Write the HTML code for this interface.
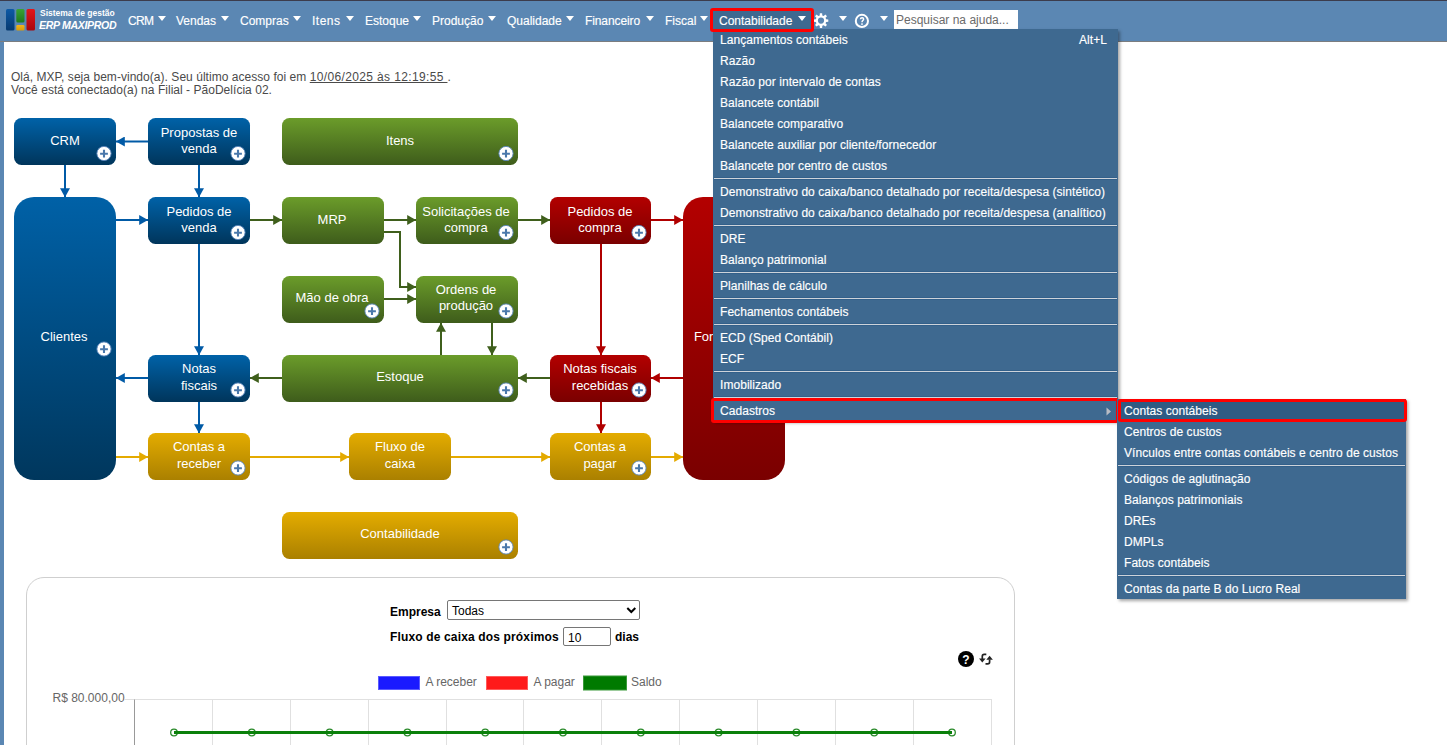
<!DOCTYPE html>
<html><head><meta charset="utf-8">
<style>
*{margin:0;padding:0;box-sizing:border-box}
html,body{width:1447px;height:745px;overflow:hidden;background:#fff;font-family:"Liberation Sans",sans-serif}
.abs{position:absolute}
#topline{left:0;top:0;width:1447px;height:1px;background:#3c3c4c}
#nav{left:0;top:1px;width:1447px;height:41px;background:#5b87b3;border-bottom:1px solid #7b7d80}
#leftstrip{left:0;top:42px;width:4px;height:703px;background:#5b87b3}
.nt{position:absolute;top:14px;font-size:12px;color:#fff;white-space:nowrap;line-height:14px;-webkit-text-stroke:0.15px #fff}
.tri{position:absolute;top:16px;width:0;height:0;border-left:4px solid transparent;border-right:4px solid transparent;border-top:5px solid #fff}
.greet{position:absolute;left:11px;font-size:12px;color:#4a4a4a;white-space:nowrap;line-height:13px;letter-spacing:0.04px}
.dd{position:absolute;background:#3e6990;box-shadow:2px 2px 3px rgba(0,0,0,.35)}
.mi{position:absolute;font-size:12px;color:#fff;white-space:nowrap;line-height:14px;letter-spacing:0.05px;-webkit-text-stroke:0.15px #fff}
.sep{position:absolute;height:3px;background:#cdd3da;border-top:1px solid #33608a;border-bottom:1px solid #33608a}
.redbox{position:absolute;border:3px solid #ff0000;border-radius:3px}
</style></head><body>
<div class="abs" id="topline"></div>
<div class="abs" id="nav"></div>
<div class="abs" id="leftstrip"></div>

<!-- logo -->
<svg class="abs" style="left:0;top:0" width="40" height="42">
 <defs>
  <linearGradient id="lb" x1="0" y1="0" x2="0" y2="1"><stop offset="0" stop-color="#0d5aa6"/><stop offset="1" stop-color="#073a70"/></linearGradient>
  <linearGradient id="lg" x1="0" y1="0" x2="0" y2="1"><stop offset="0" stop-color="#3aa334"/><stop offset="1" stop-color="#1f7a1c"/></linearGradient>
  <linearGradient id="lr" x1="0" y1="0" x2="0" y2="1"><stop offset="0" stop-color="#e3151b"/><stop offset="1" stop-color="#a8080d"/></linearGradient>
  <linearGradient id="ly" x1="0" y1="0" x2="0" y2="1"><stop offset="0" stop-color="#f2b51c"/><stop offset="1" stop-color="#d99b08"/></linearGradient>
 </defs>
 <rect x="6" y="9" width="8.5" height="21.5" rx="1.5" fill="url(#lb)"/>
 <rect x="16.3" y="9" width="8.2" height="13.5" rx="1.5" fill="url(#lg)"/>
 <rect x="16.3" y="25" width="8.2" height="5.5" rx="1.2" fill="url(#ly)"/>
 <rect x="26.5" y="9" width="8.5" height="21.5" rx="1.5" fill="url(#lr)"/>
</svg>
<div class="abs" style="left:40px;top:8px;font-size:8.5px;font-weight:bold;color:#fff;white-space:nowrap;line-height:10px">Sistema de gestão</div>
<div class="abs" style="left:39px;top:19px;font-size:10.6px;font-weight:bold;font-style:italic;color:#fff;white-space:nowrap;line-height:12px;letter-spacing:-0.35px">ERP MAXIPROD</div>

<!-- nav items -->
<div class="nt" style="left:128px;letter-spacing:-0.7px">CRM</div><div class="tri" style="left:158px"></div>
<div class="nt" style="left:176px">Vendas</div><div class="tri" style="left:221px"></div>
<div class="nt" style="left:240px">Compras</div><div class="tri" style="left:293px"></div>
<div class="nt" style="left:312px;letter-spacing:0.5px">Itens</div><div class="tri" style="left:346px"></div>
<div class="nt" style="left:365px">Estoque</div><div class="tri" style="left:413px"></div>
<div class="nt" style="left:432px">Produção</div><div class="tri" style="left:488px"></div>
<div class="nt" style="left:507px">Qualidade</div><div class="tri" style="left:566px"></div>
<div class="nt" style="left:585px;letter-spacing:-0.1px">Financeiro</div><div class="tri" style="left:646px"></div>
<div class="nt" style="left:665px">Fiscal</div><div class="tri" style="left:700px"></div>
<div class="abs" style="left:713px;top:11px;width:98px;height:18px;background:#3e6990"></div>
<div class="nt" style="left:719px">Contabilidade</div><div class="tri" style="left:798px"></div>

<!-- gear -->
<svg class="abs" style="left:812px;top:11px" width="18" height="19" viewBox="0 0 18 19">
 <path fill="#fff" fill-rule="evenodd" d="M7.72 4.46 L7.84 2.29 L10.16 2.29 L10.28 4.46 L11.73 5.06 L13.35 3.61 L14.99 5.25 L13.54 6.87 L14.14 8.32 L16.31 8.44 L16.31 10.76 L14.14 10.88 L13.54 12.33 L14.99 13.95 L13.35 15.59 L11.73 14.14 L10.28 14.74 L10.16 16.91 L7.84 16.91 L7.72 14.74 L6.27 14.14 L4.65 15.59 L3.01 13.95 L4.46 12.33 L3.86 10.88 L1.69 10.76 L1.69 8.44 L3.86 8.32 L4.46 6.87 L3.01 5.25 L4.65 3.61 L6.27 5.06Z M12.1 9.6 A3.1 3.1 0 1 0 5.9 9.6 A3.1 3.1 0 1 0 12.1 9.6Z"/>
</svg>
<div class="tri" style="left:839px"></div>
<svg class="abs" style="left:853px;top:12px" width="18" height="18" viewBox="0 0 18 18">
 <circle cx="8.9" cy="8.9" r="6.1" fill="none" stroke="#fff" stroke-width="2"/>
 <path d="M7.5 7.2Q7.5 5.7 9.1 5.7Q10.6 5.7 10.6 7.1Q10.6 8.1 9.7 8.6Q9 9.1 9 10.3" fill="none" stroke="#fff" stroke-width="1.5"/>
 <rect x="8.25" y="11.3" width="1.5" height="1.6" fill="#fff"/>
</svg>
<div class="tri" style="left:880px"></div>
<div class="abs" style="left:894px;top:10px;width:124px;height:19px;background:#fff"></div>
<div class="abs" style="left:896px;top:13px;font-size:12px;color:#6a6a6a;white-space:nowrap;line-height:14px">Pesquisar na ajuda...</div>

<!-- greeting -->
<div class="greet" style="top:71px">Olá, MXP, seja bem-vindo(a). Seu último acesso foi em <span style="text-decoration:underline;text-underline-offset:1px;letter-spacing:0.36px">10/06/2025 às 12:19:55 </span>.</div>
<div class="greet" style="top:84px;letter-spacing:0.03px">Você está conectado(a) na Filial - PãoDelícia 02.</div>

<!-- DIAGRAM -->
<svg class="abs" style="left:0;top:0" width="800" height="570" font-family="Liberation Sans" font-size="13">
 <defs>
  <linearGradient id="gB" x1="0" y1="0" x2="0" y2="1"><stop offset="0" stop-color="#0062a8"/><stop offset="1" stop-color="#00355b"/></linearGradient>
  <linearGradient id="gBt" x1="0" y1="0" x2="0" y2="1"><stop offset="0" stop-color="#0061a7"/><stop offset="1" stop-color="#00375d"/></linearGradient>
  <linearGradient id="gG" x1="0" y1="0" x2="0" y2="1"><stop offset="0" stop-color="#6b9c2a"/><stop offset="1" stop-color="#3e5c1b"/></linearGradient>
  <linearGradient id="gR" x1="0" y1="0" x2="0" y2="1"><stop offset="0" stop-color="#b30000"/><stop offset="1" stop-color="#7a0000"/></linearGradient>
  <linearGradient id="gY" x1="0" y1="0" x2="0" y2="1"><stop offset="0" stop-color="#e4ac00"/><stop offset="1" stop-color="#aa8000"/></linearGradient>
  <g id="plus">
   <circle r="7.1" fill="#fff" stroke="#5a86bb" stroke-width="0.9"/>
   <path d="M-3.9 0.2H3.9M0 -3.7V4.1" stroke="#4a78ab" stroke-width="2.1"/>
  </g>
  <marker id="aB" viewBox="0 0 9 10" refX="8.8" refY="5" markerWidth="9" markerHeight="10" markerUnits="userSpaceOnUse" orient="auto"><path d="M0 0L9 5L0 10z" fill="#005aa6"/></marker>
  <marker id="aG" viewBox="0 0 9 10" refX="8.8" refY="5" markerWidth="9" markerHeight="10" markerUnits="userSpaceOnUse" orient="auto"><path d="M0 0L9 5L0 10z" fill="#3f5f1c"/></marker>
  <marker id="aR" viewBox="0 0 9 10" refX="8.8" refY="5" markerWidth="9" markerHeight="10" markerUnits="userSpaceOnUse" orient="auto"><path d="M0 0L9 5L0 10z" fill="#b00000"/></marker>
  <marker id="aY" viewBox="0 0 9 10" refX="8.8" refY="5" markerWidth="9" markerHeight="10" markerUnits="userSpaceOnUse" orient="auto"><path d="M0 0L9 5L0 10z" fill="#e4aa00"/></marker>
 </defs>
 <g fill="none" stroke-width="2">
  <!-- blue -->
  <path d="M148 141.5H116" stroke="#005aa6" marker-end="url(#aB)"/>
  <path d="M65 165V197" stroke="#005aa6" marker-end="url(#aB)"/>
  <path d="M199 165V197" stroke="#005aa6" marker-end="url(#aB)"/>
  <path d="M116 220H148" stroke="#005aa6" marker-end="url(#aB)"/>
  <path d="M199 244V355" stroke="#005aa6" marker-end="url(#aB)"/>
  <path d="M148 378H116" stroke="#005aa6" marker-end="url(#aB)"/>
  <path d="M199 401V433" stroke="#005aa6" marker-end="url(#aB)"/>
  <!-- green -->
  <path d="M250 220H282" stroke="#3f5f1c" marker-end="url(#aG)"/>
  <path d="M384 220H416" stroke="#3f5f1c" marker-end="url(#aG)"/>
  <path d="M518 220H550" stroke="#3f5f1c" marker-end="url(#aG)"/>
  <path d="M384 232H400V287H416" stroke="#3f5f1c" marker-end="url(#aG)"/>
  <path d="M384 299H416" stroke="#3f5f1c" marker-end="url(#aG)"/>
  <path d="M441 355V323" stroke="#3f5f1c" marker-end="url(#aG)"/>
  <path d="M492 323V355" stroke="#3f5f1c" marker-end="url(#aG)"/>
  <path d="M282 378H250" stroke="#3f5f1c" marker-end="url(#aG)"/>
  <path d="M550 378H518" stroke="#3f5f1c" marker-end="url(#aG)"/>
  <!-- red -->
  <path d="M651 220H683" stroke="#b00000" marker-end="url(#aR)"/>
  <path d="M601 244V355" stroke="#b00000" marker-end="url(#aR)"/>
  <path d="M683 378H651" stroke="#b00000" marker-end="url(#aR)"/>
  <path d="M601 401V433" stroke="#b00000" marker-end="url(#aR)"/>
  <!-- gold -->
  <path d="M116 457H148" stroke="#e4aa00" marker-end="url(#aY)"/>
  <path d="M250 457H349" stroke="#e4aa00" marker-end="url(#aY)"/>
  <path d="M451 457H550" stroke="#e4aa00" marker-end="url(#aY)"/>
  <path d="M651 457H683" stroke="#e4aa00" marker-end="url(#aY)"/>
 </g>
 <g fill="#fff" text-anchor="middle">
  <!-- blue boxes -->
  <rect x="14" y="118" width="102" height="47" rx="7.5" fill="url(#gB)"/>
  <text x="65" y="144.5">CRM</text><use href="#plus" x="104" y="153.5"/>
  <rect x="148" y="118" width="102" height="47" rx="7.5" fill="url(#gB)"/>
  <text x="199" y="137">Propostas de</text><text x="199" y="153">venda</text><use href="#plus" x="238" y="153.5"/>
  <rect x="14" y="197" width="102" height="283" rx="20" fill="url(#gBt)"/>
  <text x="64" y="341">Clientes</text><use href="#plus" x="104" y="349"/>
  <rect x="148" y="197" width="102" height="47" rx="7.5" fill="url(#gB)"/>
  <text x="199" y="216">Pedidos de</text><text x="199" y="232">venda</text><use href="#plus" x="238" y="232.5"/>
  <rect x="148" y="355" width="102" height="47" rx="7.5" fill="url(#gB)"/>
  <text x="199" y="373">Notas</text><text x="199" y="390">fiscais</text><use href="#plus" x="238" y="390"/>
  <!-- green boxes -->
  <rect x="282" y="118" width="236" height="47" rx="7.5" fill="url(#gG)"/>
  <text x="400" y="144.5">Itens</text><use href="#plus" x="506" y="153.5"/>
  <rect x="282" y="197" width="102" height="47" rx="7.5" fill="url(#gG)"/>
  <text x="332" y="223.5">MRP</text>
  <rect x="416" y="197" width="102" height="47" rx="7.5" fill="url(#gG)"/>
  <text x="466" y="216">Solicitações de</text><text x="466" y="232">compra</text><use href="#plus" x="506" y="232.5"/>
  <rect x="282" y="276" width="102" height="47" rx="7.5" fill="url(#gG)"/>
  <text x="332" y="302">Mão de obra</text><use href="#plus" x="372" y="311"/>
  <rect x="416" y="276" width="102" height="47" rx="7.5" fill="url(#gG)"/>
  <text x="466" y="294">Ordens de</text><text x="466" y="310">produção</text><use href="#plus" x="506" y="311"/>
  <rect x="282" y="355" width="236" height="47" rx="7.5" fill="url(#gG)"/>
  <text x="400" y="381">Estoque</text><use href="#plus" x="506" y="390"/>
  <!-- red boxes -->
  <rect x="550" y="197" width="101" height="47" rx="7.5" fill="url(#gR)"/>
  <text x="600" y="216">Pedidos de</text><text x="600" y="232">compra</text><use href="#plus" x="639" y="232.5"/>
  <rect x="683" y="197" width="102" height="283" rx="20" fill="url(#gR)"/>
  <text x="734" y="341">Fornecedores</text>
  <rect x="550" y="355" width="101" height="47" rx="7.5" fill="url(#gR)"/>
  <text x="600" y="373">Notas fiscais</text><text x="600" y="390">recebidas</text><use href="#plus" x="639" y="390"/>
  <!-- gold boxes -->
  <rect x="148" y="433" width="102" height="47" rx="7.5" fill="url(#gY)"/>
  <text x="199" y="451">Contas a</text><text x="199" y="468">receber</text><use href="#plus" x="238" y="468"/>
  <rect x="349" y="433" width="102" height="47" rx="7.5" fill="url(#gY)"/>
  <text x="400" y="451">Fluxo de</text><text x="400" y="468">caixa</text>
  <rect x="550" y="433" width="101" height="47" rx="7.5" fill="url(#gY)"/>
  <text x="600" y="451">Contas a</text><text x="600" y="468">pagar</text><use href="#plus" x="639" y="468"/>
  <rect x="282" y="512" width="236" height="47" rx="7.5" fill="url(#gY)"/>
  <text x="400" y="538">Contabilidade</text><use href="#plus" x="506" y="547"/>
 </g>
</svg>

<!-- CHART PANEL -->
<div class="abs" style="left:26px;top:577px;width:989px;height:200px;border:1px solid #cfcfcf;border-radius:18px"></div>
<div class="abs" style="left:390px;top:605px;font-size:12px;font-weight:bold;color:#000;line-height:14px">Empresa</div>
<div class="abs" style="left:447px;top:600px;width:193px;height:20px;border:1px solid #767676;border-radius:2px;background:#fff"></div>
<div class="abs" style="left:452px;top:604px;font-size:12px;color:#000;line-height:14px">Todas</div>
<svg class="abs" style="left:626px;top:606px" width="11" height="9"><path d="M1.3 2L5.3 6L9.3 2" fill="none" stroke="#000" stroke-width="2"/></svg>
<div class="abs" style="left:390px;top:630px;font-size:12px;font-weight:bold;color:#000;line-height:14px;letter-spacing:0.15px">Fluxo de caixa dos próximos</div>
<div class="abs" style="left:563px;top:627px;width:48px;height:19px;border:1px solid #767676;border-radius:2px;background:#fff"></div>
<div class="abs" style="left:568px;top:631px;font-size:12px;color:#000;line-height:14px">10</div>
<div class="abs" style="left:615px;top:630px;font-size:12px;font-weight:bold;color:#000;line-height:14px">dias</div>

<svg class="abs" style="left:957px;top:650px" width="40" height="18">
 <circle cx="9" cy="9" r="8" fill="#000"/>
 <text x="9" y="13.5" font-size="12" font-weight="bold" font-family="Liberation Sans" fill="#fff" text-anchor="middle">?</text>
 <path d="M25.3 9V6.2Q25.3 4.3 27.2 4.3H29.3" fill="none" stroke="#222" stroke-width="1.7"/>
 <path d="M22 8.6H28.6L25.3 12.4Z" fill="#222"/>
 <path d="M32.6 9.5V12Q32.6 13.9 30.7 13.9H28.5" fill="none" stroke="#222" stroke-width="1.7"/>
 <path d="M29.3 9.8H35.9L32.6 5.8Z" fill="#222"/>
</svg>

<svg class="abs" style="left:0;top:660px" width="1000" height="85" font-family="Liberation Sans" font-size="12">
 <rect x="378.5" y="16.5" width="41" height="13" fill="#1a1aff" stroke="#5a5aff" stroke-width="1"/>
 <text x="425.5" y="26" fill="#666">A receber</text>
 <rect x="486.5" y="16.5" width="41" height="13" fill="#ff1a1a" stroke="#ff5a5a" stroke-width="1"/>
 <text x="533.5" y="26" fill="#666">A pagar</text>
 <rect x="583.5" y="16" width="43" height="14" fill="#007a00" stroke="#3a9a3a" stroke-width="1"/>
 <text x="631" y="26" fill="#666">Saldo</text>
 <text x="52.5" y="42" fill="#666">R$ 80.000,00</text>
 <g stroke="#e0e0e0" stroke-width="1">
  <path d="M124 39.5H992"/>
  <path d="M212.5 39.5V85M290.5 39.5V85M368.5 39.5V85M446.5 39.5V85M523.5 39.5V85M601.5 39.5V85M679.5 39.5V85M757.5 39.5V85M835.5 39.5V85M913.5 39.5V85M991.5 39.5V85"/>
 </g>
 <path d="M134.5 39.5V85" stroke="#999" stroke-width="1"/>
  <g fill="#fff" stroke="#2a8a2a" stroke-width="1.3">
  <circle cx="174" cy="72.5" r="3.3"/><circle cx="251.8" cy="72.5" r="3.3"/><circle cx="329.6" cy="72.5" r="3.3"/><circle cx="407.4" cy="72.5" r="3.3"/><circle cx="485.2" cy="72.5" r="3.3"/><circle cx="563" cy="72.5" r="3.3"/><circle cx="640.8" cy="72.5" r="3.3"/><circle cx="718.6" cy="72.5" r="3.3"/><circle cx="796.4" cy="72.5" r="3.3"/><circle cx="874.2" cy="72.5" r="3.3"/><circle cx="952" cy="72.5" r="3.3"/>
 </g>
 <path d="M174 72.5H952" stroke="#0a800a" stroke-width="3"/>
</svg>

<!-- DROPDOWN -->
<div class="dd" style="left:713px;top:29px;width:405px;height:392px"></div>
<div class="mi" style="left:720px;top:33px">Lançamentos contábeis</div>
<div class="mi" style="left:1079px;top:33px">Alt+L</div>
<div class="mi" style="left:720px;top:54px">Razão</div>
<div class="mi" style="left:720px;top:75px">Razão por intervalo de contas</div>
<div class="mi" style="left:720px;top:96px">Balancete contábil</div>
<div class="mi" style="left:720px;top:117px">Balancete comparativo</div>
<div class="mi" style="left:720px;top:138px">Balancete auxiliar por cliente/fornecedor</div>
<div class="mi" style="left:720px;top:159px">Balancete por centro de custos</div>
<div class="sep" style="left:714px;top:177px;width:403px"></div>
<div class="mi" style="left:720px;top:185px">Demonstrativo do caixa/banco detalhado por receita/despesa (sintético)</div>
<div class="mi" style="left:720px;top:206px">Demonstrativo do caixa/banco detalhado por receita/despesa (analítico)</div>
<div class="sep" style="left:714px;top:224px;width:403px"></div>
<div class="mi" style="left:720px;top:232px">DRE</div>
<div class="mi" style="left:720px;top:253px">Balanço patrimonial</div>
<div class="sep" style="left:714px;top:271px;width:403px"></div>
<div class="mi" style="left:720px;top:279px">Planilhas de cálculo</div>
<div class="sep" style="left:714px;top:297px;width:403px"></div>
<div class="mi" style="left:720px;top:305px">Fechamentos contábeis</div>
<div class="sep" style="left:714px;top:323px;width:403px"></div>
<div class="mi" style="left:720px;top:331px">ECD (Sped Contábil)</div>
<div class="mi" style="left:720px;top:352px">ECF</div>
<div class="sep" style="left:714px;top:370px;width:403px"></div>
<div class="mi" style="left:720px;top:378px">Imobilizado</div>
<div class="sep" style="left:714px;top:396px;width:403px"></div>
<div class="mi" style="left:720px;top:404px">Cadastros</div>
<svg class="abs" style="left:1106px;top:407px" width="6" height="10"><path d="M0.5 0.5L5 4.5L0.5 8.5z" fill="#b8bcc4"/></svg>
<div class="redbox" style="left:711px;top:398px;width:408px;height:25px"></div>

<div class="redbox" style="left:710px;top:8px;width:104px;height:24px"></div>
<!-- SUBMENU -->
<div class="dd" style="left:1117px;top:399px;width:289px;height:200px"></div>
<div class="abs" style="left:1121px;top:402px;width:283px;height:18px;background:#2f5b83"></div>
<div class="mi" style="left:1124px;top:404px">Contas contábeis</div>
<div class="mi" style="left:1124px;top:425px">Centros de custos</div>
<div class="mi" style="left:1124px;top:446px">Vínculos entre contas contábeis e centro de custos</div>
<div class="sep" style="left:1118px;top:464px;width:287px"></div>
<div class="mi" style="left:1124px;top:472px">Códigos de aglutinação</div>
<div class="mi" style="left:1124px;top:493px">Balanços patrimoniais</div>
<div class="mi" style="left:1124px;top:514px">DREs</div>
<div class="mi" style="left:1124px;top:535px">DMPLs</div>
<div class="mi" style="left:1124px;top:556px">Fatos contábeis</div>
<div class="sep" style="left:1118px;top:574px;width:287px"></div>
<div class="mi" style="left:1124px;top:582px">Contas da parte B do Lucro Real</div>
<div class="redbox" style="left:1118px;top:399px;width:289px;height:23px"></div>
</body></html>
